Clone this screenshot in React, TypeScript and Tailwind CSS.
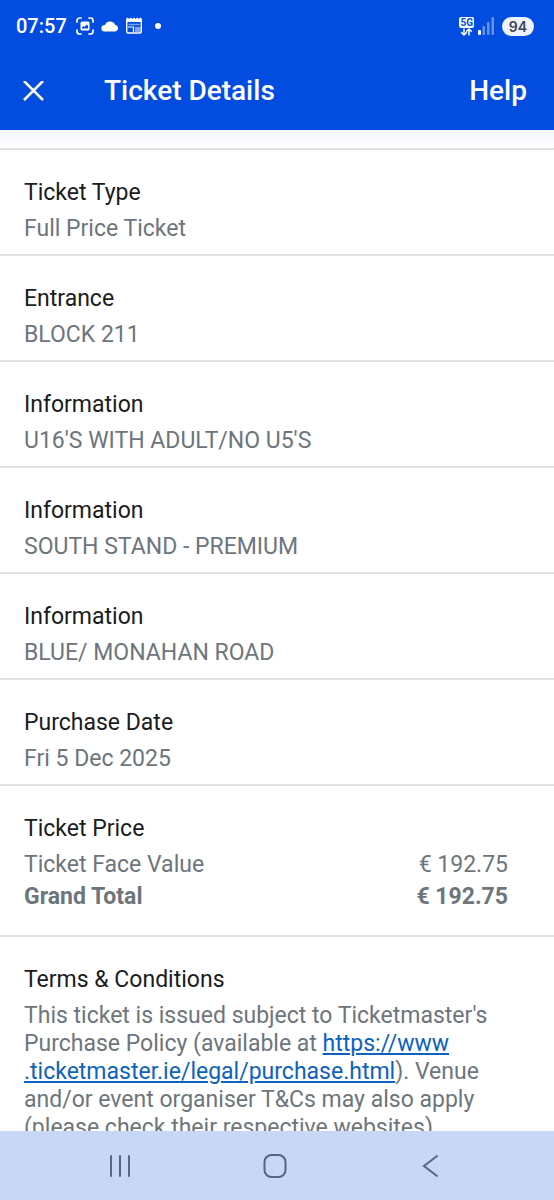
import type { ReactNode } from "react";

interface TicketField {
  id: string;
  label: string;
  value: string;
}

interface PriceLine {
  label: string;
  amount: string;
  total?: boolean;
}

const fields: TicketField[] = [
  { id: "type", label: "Ticket Type", value: "Full Price Ticket" },
  { id: "entrance", label: "Entrance", value: "BLOCK 211" },
  { id: "info-1", label: "Information", value: "U16'S WITH ADULT/NO U5'S" },
  { id: "info-2", label: "Information", value: "SOUTH STAND - PREMIUM" },
  { id: "info-3", label: "Information", value: "BLUE/ MONAHAN ROAD" },
  { id: "purchased", label: "Purchase Date", value: "Fri 5 Dec 2025" },
];

const prices: PriceLine[] = [
  { label: "Ticket Face Value", amount: "€ 192.75" },
  { label: "Grand Total", amount: "€ 192.75", total: true },
];

function StatusBar() {
  return (
    <div className="flex h-[52px] items-center justify-between pl-4 pr-5">
      <div className="flex items-center gap-2">
        <span className="text-[20px] leading-6 font-medium">07:57</span>
        {/* Screenshot */}
        <svg width="20" height="20" viewBox="0 0 20 20" fill="none" aria-hidden="true">
          <path
            d="M2 6V4.5A2.5 2.5 0 0 1 4.5 2H6M14 2h1.5A2.5 2.5 0 0 1 18 4.5V6M18 14v1.5a2.5 2.5 0 0 1-2.5 2.5H14M6 18H4.5A2.5 2.5 0 0 1 2 15.5V14"
            stroke="currentColor"
            strokeWidth="1.7"
            strokeLinecap="round"
          />
          <path
            d="M7 5.5h6A1.5 1.5 0 0 1 14.5 7v6a1.5 1.5 0 0 1-1.5 1.5H7A1.5 1.5 0 0 1 5.5 13V7A1.5 1.5 0 0 1 7 5.5zM7 12.5h6V9.700l-1.300-1.200-1.900 2.300-1.200-.8L7 11.500z"
            fill="currentColor"
            fillRule="evenodd"
          />
        </svg>
        {/* Cloud */}
        <svg width="18" height="12" viewBox="0 0 18 12" fill="currentColor" aria-hidden="true" className="-mx-[2px]">
          <path d="M3.3 11.5a3.3 3.3 0 0 1-.3-6.5c.3 0 .6 0 .9.1A5.400 5.400 0 0 1 14 4.700a3.500 3.500 0 0 1 .6 6.800z" />
        </svg>
        {/* News */}
        <svg width="18" height="18" viewBox="0 0 18 18" fill="none" aria-hidden="true">
          <path d="M1 2l1.600-1.500L4.200 2l1.600-1.500L7.400 2 9 .5 10.600 2l1.600-1.500L13.800 2l1.600-1.500L17 2v3H1z" fill="currentColor" />
          <rect x="1.7" y="3" width="14.6" height="13" rx="1.5" stroke="currentColor" strokeWidth="1.4" />
          <path d="M3.500 7.500h11" stroke="currentColor" strokeWidth="1.4" opacity="0.5" />
          <path d="M3 10h5.500v5" stroke="currentColor" strokeWidth="1.2" />
          <path d="M10 10h5.500v5H10z" fill="currentColor" opacity="0.5" />
        </svg>
        <span className="ml-1 size-[6px] rounded-full bg-white" />
      </div>

      <div className="flex items-center gap-[3px]">
        <div className="flex flex-col items-center">
          <span className="rounded-[2px] bg-white px-px text-[10px] leading-[11px] font-bold text-[#024ddf]">5G</span>
          <svg width="13" height="8" viewBox="0 0 13 8" fill="none" stroke="currentColor" strokeWidth="1.5" aria-hidden="true">
            <path d="M4 .5V7M1.200 4.300L4 7l2.800-2.700M9 7.500V1M6.200 3.700L9 1l2.800 2.700" />
          </svg>
        </div>
        <svg width="18" height="18" viewBox="0 0 18 18" fill="currentColor" aria-hidden="true">
          <rect x="1" y="13" width="3" height="5" rx="1" />
          <rect x="5.5" y="9" width="2.5" height="9" rx="1" opacity="0.4" />
          <rect x="10" y="5" width="2.5" height="13" rx="1" opacity="0.4" />
          <rect x="14.5" y="0" width="2.5" height="18" rx="1" opacity="0.4" />
        </svg>
        <span className="ml-1 flex h-[19px] w-8 items-center justify-center rounded-full bg-[#edf2fd] font-[Inter,sans-serif] text-[14px] font-semibold text-[#3e4550]">
          94
        </span>
      </div>
    </div>
  );
}

function Section({ title, children }: { title: string; children: ReactNode }) {
  return (
    <section className="border-t-2 border-[#e0e0e0] px-6 pt-[29px] pb-[11px]">
      <h2 className="mb-2 text-[#1a1c1e]">{title}</h2>
      {children}
    </section>
  );
}

export default function App() {
  return (
    <div className="flex h-screen flex-col bg-white font-[Roboto,sans-serif]">
      <header className="shrink-0 bg-[#024ddf] text-white">
        <StatusBar />
        <div className="flex h-[78px] items-center pr-[27px] pl-[23px]">
          <button type="button" aria-label="Close" className="mr-[60px]">
            <svg width="21" height="21" viewBox="0 0 21 21" stroke="currentColor" strokeWidth="2.5" aria-hidden="true">
              <path d="M1 0l19 19M20 0L1 19" />
            </svg>
          </button>
          <h1 className="flex-1 text-[28px] leading-8 font-medium">Ticket Details</h1>
          <button type="button" className="text-[28px] leading-8 font-medium">
            Help
          </button>
        </div>
      </header>

      <main className="min-h-0 flex-1 overflow-y-auto text-[23px] leading-7 text-[#6d757d] [scrollbar-width:none]">
        <div className="h-[18px] bg-linear-to-b from-[#f4f5fb] to-white" />

        {fields.map((field) => (
          <Section key={field.id} title={field.label}>
            <p>{field.value}</p>
          </Section>
        ))}

        <Section title="Ticket Price">
          <dl className="mr-[22px] mb-[13px] flex flex-col gap-1">
            {prices.map((line) => (
              <div key={line.label} className={line.total ? "flex justify-between font-bold" : "flex justify-between"}>
                <dt>{line.label}</dt>
                <dd>{line.amount}</dd>
              </div>
            ))}
          </dl>
        </Section>

        <Section title="Terms & Conditions">
          <p>
            This ticket is issued subject to Ticketmaster's Purchase Policy (available at{" "}
            <a href="https://www.ticketmaster.ie/legal/purchase.html" className="text-[#0b62c1] underline">
              https://www
              <wbr />
              .ticketmaster.ie/legal/purchase.html
            </a>
            ). Venue and/or event organiser T&amp;Cs may also apply (please check their respective websites)
          </p>
        </Section>
      </main>

      <nav className="grid h-[69px] shrink-0 grid-cols-3 items-center bg-[#c8d7f6] pr-[47px] pl-[42px] text-[#59657c]">
        <button type="button" aria-label="Recent apps" className="flex justify-center">
          <svg width="24" height="24" viewBox="0 0 24 24" fill="none" stroke="currentColor" strokeWidth="2" strokeLinecap="round" aria-hidden="true">
            <path d="M3 2v20M12 2v20M21 2v20" />
          </svg>
        </button>
        <button type="button" aria-label="Home" className="flex justify-center">
          <svg width="24" height="24" viewBox="0 0 24 24" fill="none" stroke="currentColor" strokeWidth="2" aria-hidden="true">
            <rect x="1.5" y="1" width="21" height="22" rx="7" />
          </svg>
        </button>
        <button type="button" aria-label="Back" className="flex justify-center">
          <svg width="24" height="24" viewBox="0 0 24 24" fill="none" stroke="currentColor" strokeWidth="2" strokeLinecap="round" aria-hidden="true">
            <path d="M19 2L6 12l13 10" />
          </svg>
        </button>
      </nav>
    </div>
  );
}
